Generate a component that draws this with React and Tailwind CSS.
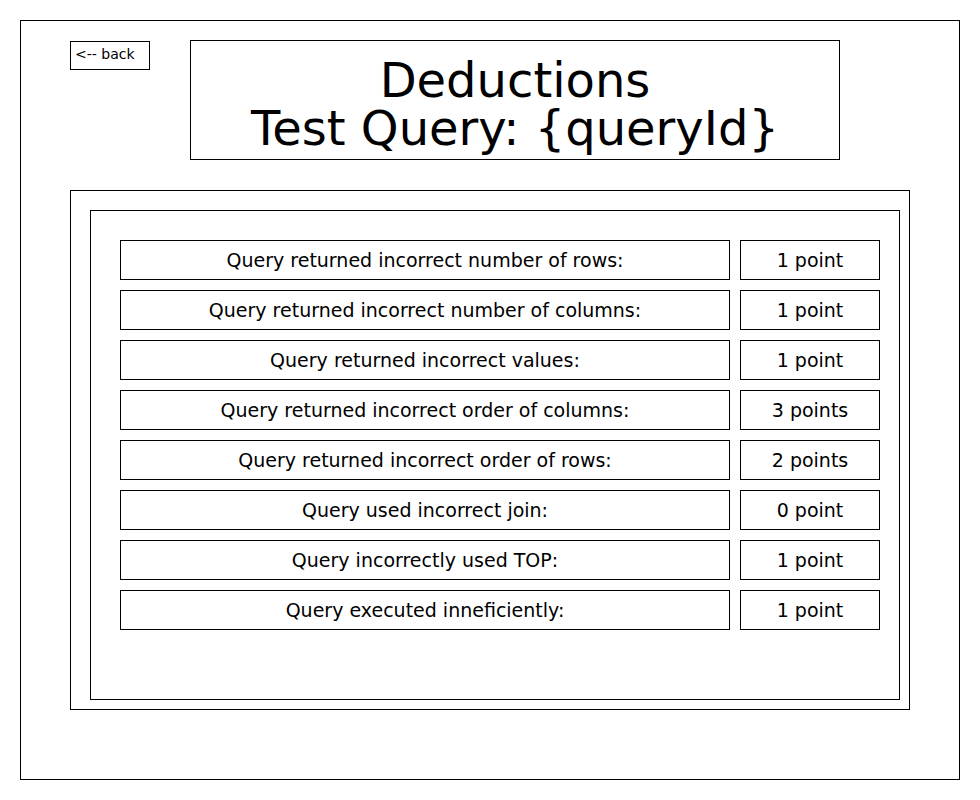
const DEDUCTIONS = [
  { label: "Query returned incorrect number of rows:", value: "1 point" },
  { label: "Query returned incorrect number of columns:", value: "1 point" },
  { label: "Query returned incorrect values:", value: "1 point" },
  { label: "Query returned incorrect order of columns:", value: "3 points" },
  { label: "Query returned incorrect order of rows:", value: "2 points" },
  { label: "Query used incorrect join:", value: "0 point" },
  { label: "Query incorrectly used TOP:", value: "1 point" },
  { label: "Query executed inneficiently:", value: "1 point" },
];

function DeductionRow({ label, value }) {
  return (
    <div className="flex gap-[10px]">
      <div className="flex h-[40px] w-[610px] items-center justify-center border border-black text-[19px]">
        {label}
      </div>
      <div className="flex h-[40px] w-[140px] items-center justify-center border border-black text-[19px]">
        {value}
      </div>
    </div>
  );
}

export default function App() {
  return (
    <div className="min-h-[800px] bg-white p-[20px] font-['DejaVu_Sans',sans-serif] text-black">
      <div className="h-[760px] w-[940px] border border-black pl-[49px] pt-[19px]">
        {/* header */}
        <div className="flex items-start">
          <button className="mt-[1px] flex h-[29px] w-[80px] items-start border border-black pl-[4px] pt-[2px] text-[14px] leading-[20px]">
            {"<-- back"}
          </button>
          <div className="ml-[40px] flex h-[120px] w-[650px] flex-col items-center border border-black pt-[15px] text-[48px] leading-[48px]">
            <span>Deductions</span>
            <span>Test Query: {"{queryId}"}</span>
          </div>
        </div>

        {/* panel */}
        <div className="mt-[30px] h-[520px] w-[840px] border border-black pl-[19px] pt-[19px]">
          <div className="flex h-[490px] w-[810px] flex-col gap-[10px] border border-black pl-[29px] pt-[29px]">
            {DEDUCTIONS.map((d) => (
              <DeductionRow key={d.label} label={d.label} value={d.value} />
            ))}
          </div>
        </div>
      </div>
    </div>
  );
}
